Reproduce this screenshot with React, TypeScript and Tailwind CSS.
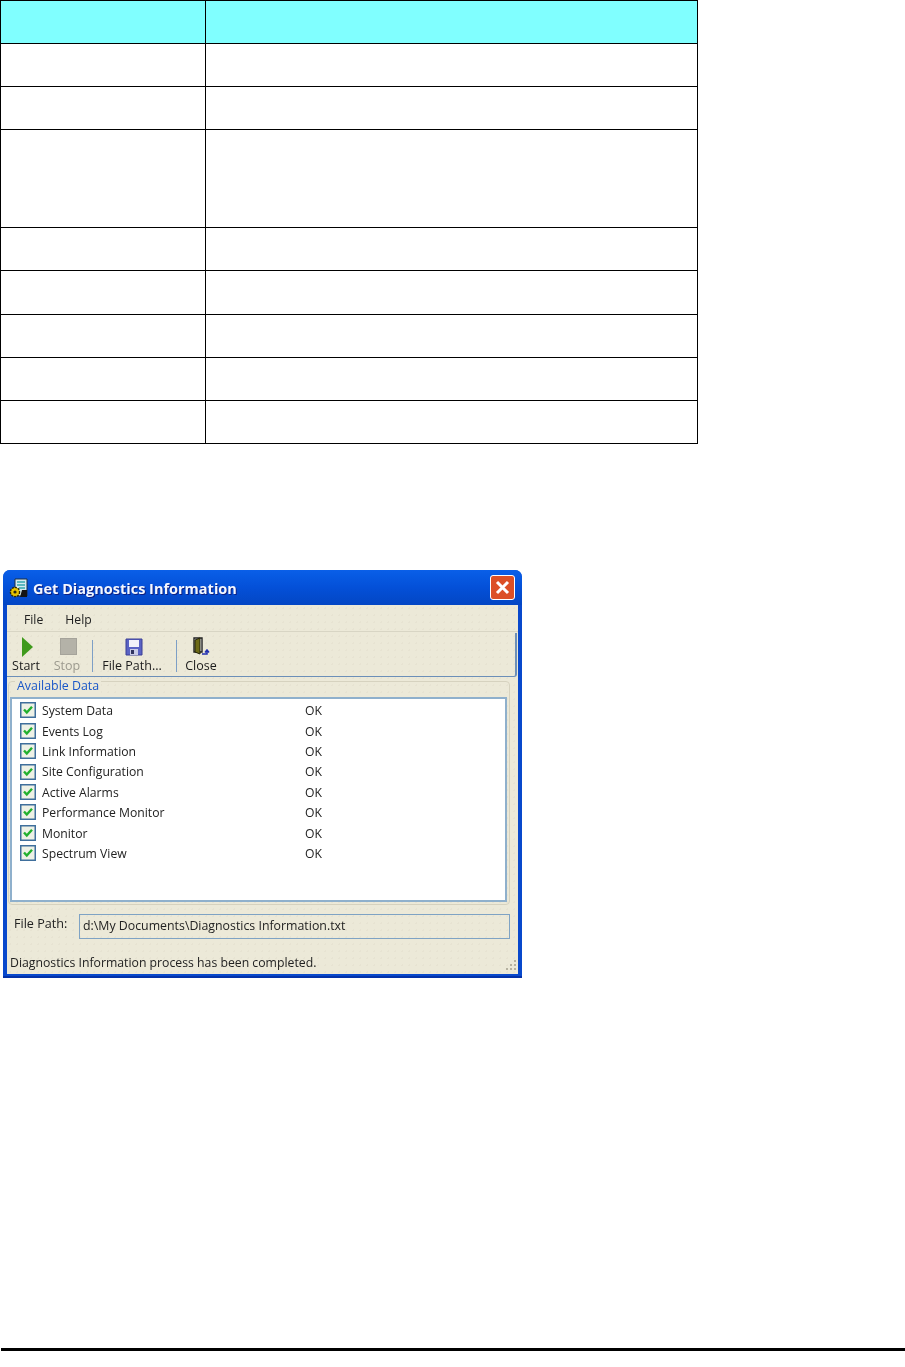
const rowHeights = ['h-[43px]', 'h-[43px]', 'h-[43px]', 'h-[98px]', 'h-[43px]', 'h-[44px]', 'h-[43px]', 'h-[43px]', 'h-[43px]']

const items = ['System Data', 'Events Log', 'Link Information', 'Site Configuration', 'Active Alarms', 'Performance Monitor', 'Monitor', 'Spectrum View']

function Check() {
  return (
    <svg width="16" height="16" viewBox="0 0 16 16" className="shrink-0 -translate-y-[1px]">
      <rect x="0.75" y="0.75" width="14.5" height="14.5" fill="#eef1e6" stroke="#3f6f9c" strokeWidth="1.5" />
      <path d="M4 7.5 L6.8 10.5 L12 4.8" fill="none" stroke="#22b02e" strokeWidth="2.4" />
    </svg>
  )
}

function WindowIcon() {
  return (
    <svg width="20" height="20" viewBox="0 0 20 20">
      <path d="M6 1 H18 V18 H6 Z" fill="#d5eaf0" stroke="#1d2f40" />
      <path d="M8 4 H16 M8 7 H16 M10 10 H16" stroke="#35a6ae" strokeWidth="1.6" />
      <path d="M13 12 H18 V19 H11 Z" fill="#141414" />
      <circle cx="6" cy="14" r="4.6" fill="#e8c400" stroke="#2e2800" strokeWidth="1.4" strokeDasharray="2 1" />
      <circle cx="6" cy="14" r="1.6" fill="#2a2a10" />
    </svg>
  )
}

function Floppy() {
  return (
    <svg width="18" height="18" viewBox="0 0 18 18">
      <path d="M1 1 H17 V17 H1 Z" fill="#5a63c4" stroke="#3a3f96" />
      <rect x="4" y="2" width="10" height="7" fill="#f2f2fa" />
      <rect x="5" y="11" width="8" height="6" fill="#c9cbe6" />
      <rect x="6" y="12" width="3" height="4" fill="#31345f" />
    </svg>
  )
}

function Door() {
  return (
    <svg width="18" height="20" viewBox="0 0 18 20">
      <path d="M2 1 H10 V15 H2 Z" fill="#fff" stroke="#222" strokeWidth="1.4" />
      <path d="M3 3 L8 1 V17 L3 15 Z" fill="#6d6a16" stroke="#23230a" />
      <path d="M10 17 H15 V14 M13 15.5 L15 13 L17 15.5" fill="none" stroke="#2230b0" strokeWidth="1.5" />
    </svg>
  )
}

function Grip() {
  return (
    <svg width="12" height="12" viewBox="0 0 12 12" fill="#b5b1a0">
      <rect x="8" y="0" width="2" height="2" />
      <rect x="4" y="4" width="2" height="2" />
      <rect x="8" y="4" width="2" height="2" />
      <rect x="0" y="8" width="2" height="2" />
      <rect x="4" y="8" width="2" height="2" />
      <rect x="8" y="8" width="2" height="2" />
    </svg>
  )
}

function ToolButton({ label, dim = false, className = '', children }: { label: string; dim?: boolean; className?: string; children: React.ReactNode }) {
  return (
    <div className={`flex flex-col items-center ${className}`}>
      <div className="flex h-[21px] items-center justify-center">{children}</div>
      <span className={`mt-[1px] text-[12.5px] whitespace-nowrap leading-[15px] ${dim ? 'text-[#9c9a8e]' : 'text-[#1c1c1c]'}`}>{label}</span>
    </div>
  )
}

export default function App() {
  return (
    <div className="flex h-[1367px] w-[905px] flex-col overflow-hidden bg-white font-['Open_Sans',sans-serif] text-[12.2px] text-[#222]">
      <div className="w-[698px] border-t border-l border-black">
        {rowHeights.map((h, i) => (
          <div key={i} className={`flex border-b border-black ${h} ${i === 0 ? 'bg-[#80ffff]' : 'bg-white'}`}>
            <div className="w-[205px] border-r border-black" />
            <div className="flex-1 border-r border-black" />
          </div>
        ))}
      </div>

      <div className="mt-[126px] ml-[3px] flex h-[408px] w-[519px] flex-col overflow-hidden rounded-t-[7px] border-b-2 border-[#0331a8] bg-[#0848cc] blur-[0.35px]">
        <div className="flex h-[35px] shrink-0 items-center bg-gradient-to-b from-[#0a5fe8] via-[#0450d8] to-[#0346c4] pr-[7px] pl-[6px]">
          <WindowIcon />
          <span className="mt-[3px] ml-[4px] text-[14.5px] font-bold text-[#f4f8ff] [text-shadow:1px_1px_#0f1f80]">Get Diagnostics Information</span>
          <div className="ml-auto flex h-[25px] w-[25px] items-center justify-center rounded-[3px] border border-white bg-[#dc4f26]">
            <svg width="15" height="15" viewBox="0 0 15 15">
              <path d="M2 2 L13 13 M13 2 L2 13" stroke="#fff" strokeWidth="3" />
            </svg>
          </div>
        </div>

        <div className="mx-[4px] mb-[2px] flex flex-1 flex-col bg-[#ece9d8] bg-[radial-gradient(#e7e3d2_1px,transparent_1px)] bg-[length:7px_7px]">
          <div className="flex h-[27px] shrink-0 items-center gap-[22px] border-b border-[#d8d5c4] pt-[4px] pl-[17px]">
            <span>File</span>
            <span>Help</span>
          </div>
          <div className="mt-[1px] mr-[1px] flex h-[44px] shrink-0 items-start rounded-br-[3px] border-r-2 border-b border-[#6c8fb8] pt-[3px] pl-[5px]">
            <ToolButton label="Start" className="w-[28px]">
              <svg width="12" height="20" viewBox="0 0 12 20" className="ml-[2px]">
                <path d="M1 0 L12 10 L1 20 Z" fill="#3f9a1c" />
              </svg>
            </ToolButton>
            <ToolButton label="Stop" dim className="ml-[14px] w-[26px]">
              <div className="ml-[2px] h-[17px] w-[17px] border border-[#a5a39a] bg-[#b4b2a8]" />
            </ToolButton>
            <div className="mt-[4px] ml-[12px] h-[32px] w-px bg-[#7d9fc6]" />
            <ToolButton label="File Path..." className="ml-[7px] w-[64px]">
              <div className="ml-[4px]">
                <Floppy />
              </div>
            </ToolButton>
            <div className="mt-[4px] ml-[12px] h-[32px] w-px bg-[#7d9fc6]" />
            <ToolButton label="Close" className="ml-[8px] w-[32px]">
              <Door />
            </ToolButton>
          </div>

          <div className="relative mt-[4px] mr-[8px] ml-[1px] h-[224px] shrink-0 rounded-[4px] border border-[#d6d2bf] pt-[15px] pr-[2px] pl-[1px]">
            <span className="absolute top-[-4px] left-[6px] bg-[#ece9d8] px-[2px] text-[12.4px] leading-[15px] text-[#1a57c8]">Available Data</span>
            <div className="h-[205px] border-2 border-[#8fb0cc] bg-white pt-[2px]">
              {items.map(name => (
                <div key={name} className="flex h-[20.45px] items-center pl-[8px]">
                  <Check />
                  <span className="ml-[6px] w-[263px]">{name}</span>
                  <span>OK</span>
                </div>
              ))}
            </div>
          </div>

          <div className="mt-[9px] mr-[8px] flex h-[25px] shrink-0 items-center">
            <span className="ml-[7px] w-[65px] -translate-y-[2px] text-[12.6px]">File Path:</span>
            <div className="flex h-[25px] flex-1 items-center border border-[#7fa3c4] pl-[3px] text-[12.35px]">d:\My Documents\Diagnostics Information.txt</div>
          </div>

          <div className="mt-auto flex h-[30px] items-center justify-between pl-[3px] text-[12.25px]">
            <span className="mt-[9px]">Diagnostics Information process has been completed.</span>
            <div className="self-end pb-[2px]">
              <Grip />
            </div>
          </div>
        </div>
      </div>

      <div className="mt-[370px] ml-[1px] h-[3px] w-[904px] shrink-0 bg-black" />
    </div>
  )
}
